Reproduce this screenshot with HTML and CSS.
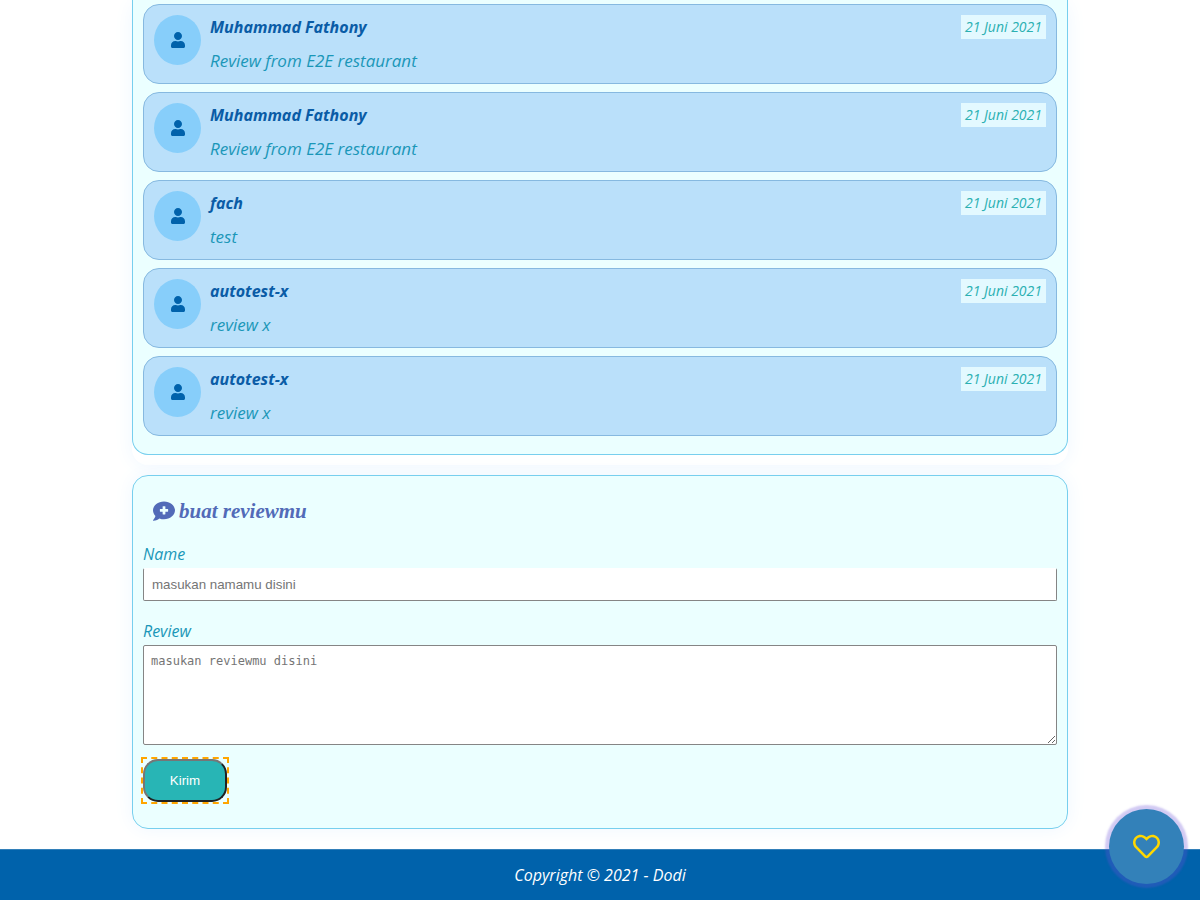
FILE: index.html
```html
<!DOCTYPE html>
<html lang="id">
<head>
<meta charset="utf-8">
<meta name="viewport" content="width=device-width, initial-scale=1">
<title>Review restoran</title>
<link rel="stylesheet" href="styles.css">
</head>
<body>
<svg class="sprite" aria-hidden="true">
  <symbol id="user" viewBox="0 0 448 512"><path d="M224 256c70.7 0 128-57.3 128-128S294.7 0 224 0 96 57.3 96 128s57.3 128 128 128zm89.6 32h-16.7c-22.2 10.2-46.9 16-72.9 16s-50.6-5.8-72.9-16h-16.7C60.2 288 0 348.2 0 422.4V464c0 26.5 21.5 48 48 48h352c26.5 0 48-21.5 48-48v-41.6c0-74.2-60.2-134.4-134.4-134.4z"/></symbol>
</svg>
<main class="content">
  <section class="shell">
    <ul class="panel reviews">
      <li class="card">
        <span class="avatar"><svg class="user"><use href="#user"/></svg></span>
        <div class="body"><h3 class="author">Muhammad Fathony</h3><p class="text">Review from E2E restaurant</p></div>
        <time class="date">21 Juni 2021</time>
      </li>
      <li class="card">
        <span class="avatar"><svg class="user"><use href="#user"/></svg></span>
        <div class="body"><h3 class="author">Muhammad Fathony</h3><p class="text">Review from E2E restaurant</p></div>
        <time class="date">21 Juni 2021</time>
      </li>
      <li class="card">
        <span class="avatar"><svg class="user"><use href="#user"/></svg></span>
        <div class="body"><h3 class="author">fach</h3><p class="text">test</p></div>
        <time class="date">21 Juni 2021</time>
      </li>
      <li class="card">
        <span class="avatar"><svg class="user"><use href="#user"/></svg></span>
        <div class="body"><h3 class="author">autotest-x</h3><p class="text">review x</p></div>
        <time class="date">21 Juni 2021</time>
      </li>
      <li class="card">
        <span class="avatar"><svg class="user"><use href="#user"/></svg></span>
        <div class="body"><h3 class="author">autotest-x</h3><p class="text">review x</p></div>
        <time class="date">21 Juni 2021</time>
      </li>
    </ul>
  </section>
  <section class="shell">
    <form class="panel form">
      <h2 class="title"><svg class="comment" viewBox="0 0 512 512" aria-hidden="true"><path d="M256 32C114.62 32 0 125.12 0 240c0 49.56 21.41 95 57 130.74C44.46 421.05 2.7 466 2.2 466.5A8 8 0 0 0 8 480c66.26 0 116-31.75 140.6-51.38A304.66 304.66 0 0 0 256 448c141.39 0 256-93.12 256-208S397.39 32 256 32zm96 232a8 8 0 0 1-8 8h-56v56a8 8 0 0 1-8 8h-48a8 8 0 0 1-8-8v-56h-56a8 8 0 0 1-8-8v-48a8 8 0 0 1 8-8h56v-56a8 8 0 0 1 8-8h48a8 8 0 0 1 8 8v56h56a8 8 0 0 1 8 8z"/></svg>buat reviewmu</h2>
      <label class="label" for="name">Name</label>
      <input class="field name" id="name" type="text" placeholder="masukan namamu disini">
      <label class="label" for="review">Review</label>
      <textarea class="field review" id="review" placeholder="masukan reviewmu disini"></textarea>
      <span class="focus"><button class="send" type="button">Kirim</button></span>
    </form>
  </section>
</main>
<footer class="footer">Copyright © 2021 - Dodi</footer>
<button class="like" type="button" aria-label="Suka"><svg class="heart" viewBox="0 0 512 512"><path d="M458.4 64.3C400.6 15.7 311.3 23 256 79.3 200.7 23 111.4 15.6 53.6 64.3-21.6 127.6-10.6 230.8 43 285.5l175.4 178.7c10 10.2 23.4 15.9 37.6 15.9 14.3 0 27.6-5.6 37.6-15.8L469 285.6c53.5-54.7 64.7-157.9-10.6-221.3zm-23.6 187.5L259.4 430.5c-2.4 2.4-4.4 2.4-6.8 0L77.2 251.8c-36.5-37.2-43.9-107.6 7.3-150.7 38.9-32.7 98.9-27.8 136.5 10.5l35 35.7 35-35.7c37.8-38.5 97.8-43.2 136.5-10.6 51.1 43.1 43.5 113.9 7.3 150.8z"/></svg></button>
</body>
</html>
```
FILE: styles.css
```css
* { box-sizing: border-box; }
body {
  margin: 0;
  background: #fff;
  color: #1a97b8;
  font-family: "Open Sans", sans-serif;
  font-size: 16px;
  font-style: italic;
}
h2, h3, p, ul { margin: 0; }
.sprite { display: none; }
.content { width: 78%; margin: 0 auto; padding-bottom: 10px; }
.shell {
  padding-bottom: 10px;
  margin-bottom: 10px;
  border-radius: 16px;
  background: #fff;
  box-shadow: 0 0 20px #eef7ff;
}
.shell:last-child { margin-bottom: 0; padding-bottom: 0; }
.content { padding-bottom: 20px; }
.panel {
  padding: 10px;
  border: 1px solid #77cfee;
  border-radius: 16px;
  background: #ebffff;
}
.reviews {
  display: flex;
  flex-direction: column;
  gap: 8px;
  padding: 4px 10px 18px;
  border-top: 0;
  border-radius: 0 0 16px 16px;
  list-style: none;
}
.card {
  display: flex;
  align-items: flex-start;
  gap: 9px;
  min-height: 80px;
  padding: 10px;
  border: 1px solid #86b9e0;
  border-radius: 16px;
  background: #bae0fa;
}
.avatar {
  display: flex;
  align-items: center;
  justify-content: center;
  width: 47px;
  height: 50px;
  border-radius: 50%;
  background: #87cefa;
}
.user { width: 14px; height: 16px; fill: #0062ab; }
.body { flex: 1; display: grid; gap: 10px; }
.author { font-size: 16px; line-height: 24px; color: #0a5ca6; }
.text { font-size: 17px; line-height: 24px; }
.date {
  padding: 0 4px;
  background: #e3f9ff;
  color: #2bb0b2;
  font-size: 14px;
  line-height: 24px;
}
.form { display: flex; flex-direction: column; align-items: stretch; padding-bottom: 26px; }
.title {
  display: flex;
  align-items: center;
  gap: 4px;
  margin: 9px 0 15px;
  padding-left: 10px;
  color: #526bb8;
  font-family: "Liberation Serif", serif;
  font-size: 21px;
  line-height: 32px;
}
.comment { width: 22px; height: 22px; fill: currentColor; }
.label { line-height: 24px; margin-bottom: 2px; }
.field {
  width: 100%;
  border: 1px solid #858585;
  border-radius: 2px;
  background: #fff;
}
.field::placeholder { color: #757575; }
.name {
  height: 33px;
  margin-bottom: 18px;
  padding: 0 8px;
  border-top-color: #fff;
  font-family: "Liberation Sans", sans-serif;
}
.review {
  height: 100px;
  padding: 8px 7px;
  font: 12px/15px "DejaVu Sans Mono", monospace;
  resize: vertical;
}
.focus {
  align-self: flex-start;
  display: flex;
  margin-top: 14px;
  outline: 2px dashed orange;
}
.send {
  width: 84px;
  height: 43px;
  border: 2px outset #767676;
  border-radius: 15px;
  background: #28b5b5;
  color: #fff;
  font-family: "Liberation Sans", sans-serif;
}
.footer {
  padding: 13px 0;
  border-top: 1px solid #3380b9;
  background: #0062ab;
  color: #fff;
  line-height: 24px;
  text-align: center;
}
.like {
  position: fixed;
  right: 16px;
  bottom: 16px;
  display: flex;
  align-items: center;
  justify-content: center;
  width: 75px;
  height: 75px;
  padding: 0;
  border: 0;
  border-radius: 50%;
  background: #3381b9;
  box-shadow: 0 0 2px 4px rgba(106, 80, 215, .3);
}
.heart { width: 27px; height: 27px; fill: #ffd700; }
```
